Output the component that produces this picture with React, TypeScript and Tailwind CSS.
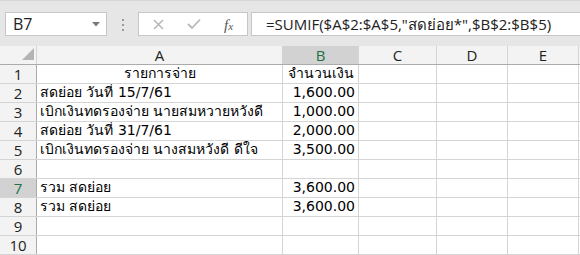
import React from "react";

type Cell = { text: string; align?: "left" | "right" | "center" };

const cols = [
  { label: "A", w: "w-[246px]" },
  { label: "B", w: "w-[76px]" },
  { label: "C", w: "w-[78px]" },
  { label: "D", w: "w-[71px]" },
  { label: "E", w: "w-[71px]" },
];

const rows: Cell[][] = [
  [{ text: "รายการจ่าย", align: "center" }, { text: "จำนวนเงิน", align: "center" }],
  [{ text: "สดย่อย วันที่ 15/7/61" }, { text: "1,600.00", align: "right" }],
  [{ text: "เบิกเงินทดรองจ่าย นายสมหวายหวังดี" }, { text: "1,000.00", align: "right" }],
  [{ text: "สดย่อย วันที่ 31/7/61" }, { text: "2,000.00", align: "right" }],
  [{ text: "เบิกเงินทดรองจ่าย นางสมหวังดี ดีใจ" }, { text: "3,500.00", align: "right" }],
  [],
  [{ text: "รวม สดย่อย" }, { text: "3,600.00", align: "right" }],
  [{ text: "รวม สดย่อย" }, { text: "3,600.00", align: "right" }],
  [],
  [],
];

const cellFont = { fontFamily: '"DejaVu Sans", "Noto Sans", sans-serif' };

const FormulaBar = () => (
  <div className="flex h-[46px] items-start bg-[#e6e6e6] pt-[11px] pl-[5px] border-t border-[#d6d6d6]">
    <div className="relative flex h-[24px] w-[102px] items-center border border-[#c6c6c6] bg-white pl-[7px]">
      <span className="text-[16px] text-[#222]" style={{ fontFamily: '"Open Sans", sans-serif' }}>B7</span>
      <svg className="absolute left-[86px] top-[9px]" width="8" height="5" viewBox="0 0 8 5">
        <path d="M0 0 L8 0 L4 4.5 Z" fill="#7a7a7a" />
      </svg>
    </div>
    <div className="flex w-[31px] flex-col items-center gap-[3px] pt-[7px]">
      <div className="h-[2px] w-[2px] bg-[#9a9a9a]" />
      <div className="h-[2px] w-[2px] bg-[#9a9a9a]" />
      <div className="h-[2px] w-[2px] bg-[#9a9a9a]" />
    </div>
    <div className="relative flex h-[24px] w-[110px] items-center border border-[#c6c6c6] bg-white">
      <svg className="absolute left-[14px] top-[6px]" width="11" height="11" viewBox="0 0 11 11">
        <path d="M1 1 L10 10 M10 1 L1 10" stroke="#b9b9b9" strokeWidth="1.6" />
      </svg>
      <svg className="absolute left-[48px] top-[5px]" width="14" height="12" viewBox="0 0 14 12">
        <path d="M1 6 L5 10 L13 1.5" stroke="#b9b9b9" strokeWidth="1.8" fill="none" />
      </svg>
      <span
        className="absolute left-[85px] top-[1px] text-[15px] italic text-[#555]"
        style={{ fontFamily: '"Liberation Serif", serif' }}
      >
        f<span className="text-[11px]">x</span>
      </span>
    </div>
    <div className="ml-[3px] flex h-[24px] flex-1 items-center border border-r-0 border-[#c6c6c6] bg-white pl-[14px]">
      <span
        className="whitespace-nowrap text-[15px] text-[#222]"
        style={{ fontFamily: '"Open Sans", "DejaVu Sans", sans-serif' }}
      >
        =SUMIF($A$2:$A$5,"สดย่อย*",$B$2:$B$5)
      </span>
    </div>
  </div>
);

const HeaderRow = () => (
  <div className="flex h-[19px] border-b border-[#ababab] bg-[#f3f3f3]">
    <div className="relative w-[37px] border-r border-[#d4d4d4]">
      <svg className="absolute left-[22px] top-[2px]" width="12" height="12" viewBox="0 0 12 12">
        <path d="M12 0 L12 12 L0 12 Z" fill="#b4b4b4" />
      </svg>
    </div>
    {cols.map((c) => (
      <div
        key={c.label}
        className={`${c.w} flex items-center justify-center border-r border-[#d4d4d4] text-[15px] ${
          c.label === "B" ? "bg-[#d2d2d2] text-[#217346]" : "text-[#222]"
        }`}
        style={{ fontFamily: '"Open Sans", sans-serif' }}
      >
        {c.label}
      </div>
    ))}
    <div className="flex-1" />
  </div>
);

export default function App() {
  return (
    <div className="h-[255px] w-[580px] overflow-hidden bg-white">
      <FormulaBar />
      <HeaderRow />
      {rows.map((cells, i) => {
        const sel = i === 6;
        return (
          <div key={i} className="flex h-[19px] border-b border-[#d4d4d4]">
            <div
              className={`flex w-[37px] items-center justify-center border-r border-[#ababab] text-[15px] ${
                sel ? "bg-[#d2d2d2] text-[#217346]" : "bg-[#f3f3f3] text-[#222]"
              }`}
              style={{ fontFamily: '"Open Sans", sans-serif' }}
            >
              {i + 1}
            </div>
            {cols.map((c, j) => {
              const cell = cells[j];
              const align =
                cell?.align === "right"
                  ? "justify-end"
                  : cell?.align === "center"
                  ? "justify-center"
                  : "justify-start";
              return (
                <div
                  key={c.label}
                  className={`${c.w} flex items-end ${align} overflow-hidden whitespace-nowrap border-r border-[#d4d4d4] px-[3px] pb-[1px] text-[14px] leading-[17px] text-black`}
                  style={cellFont}
                >
                  {cell?.text}
                </div>
              );
            })}
            <div className="flex-1" />
          </div>
        );
      })}
    </div>
  );
}
